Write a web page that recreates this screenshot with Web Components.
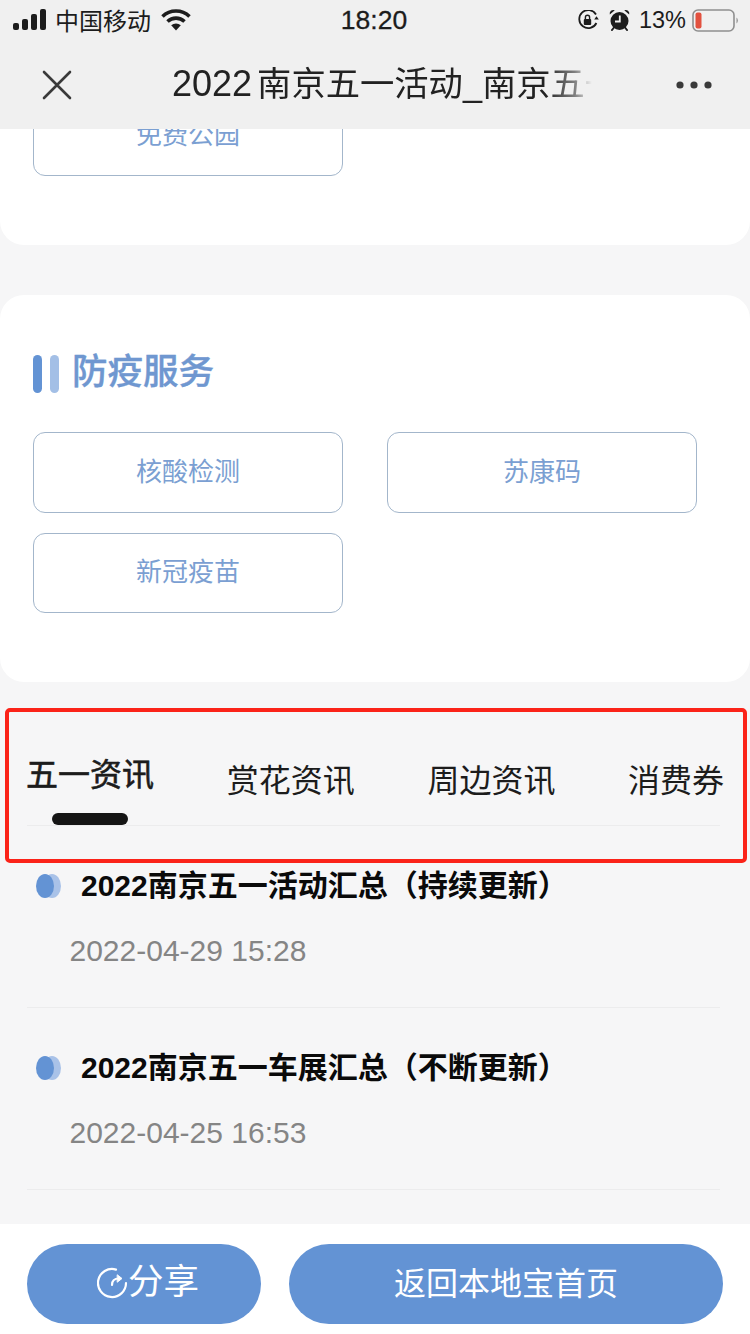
<!DOCTYPE html>
<html lang="zh">
<head>
<meta charset="utf-8">
<title>2022南京五一活动</title>
<style>
    html, body { margin: 0; padding: 0; }
    body {
        width: 750px;
        height: 1334px;
        overflow: hidden;
        background: #f6f6f7;
        font-family: "Liberation Sans", "Noto Sans CJK SC", sans-serif;
    }
</style>
</head>
<body>
<app-shell>
    <status-bar slot="top"></status-bar>
    <nav-bar slot="top" title-number="2022" title-text="南京五一活动_南京五一活动汇总"></nav-bar>

    <service-card slot="main" clipped>
        <link-button>免费公园</link-button>
    </service-card>

    <service-card slot="main" heading="防疫服务">
        <link-button>核酸检测</link-button>
        <link-button>苏康码</link-button>
        <link-button>新冠疫苗</link-button>
    </service-card>

    <tab-strip slot="main"></tab-strip>

    <news-item slot="main" title-text="2022南京五一活动汇总（持续更新）" date="2022-04-29 15:28"></news-item>
    <news-item slot="main" title-text="2022南京五一车展汇总（不断更新）" date="2022-04-25 16:53"></news-item>

    <bottom-bar slot="bottom"></bottom-bar>
    <red-mark slot="overlay"></red-mark>
</app-shell>

<script>
class AppShell extends HTMLElement {
    constructor() {
        super();
        this.attachShadow({ mode: 'open' });
        this.shadowRoot.innerHTML = `
            <style>
                :host {
                    display: flex;
                    flex-direction: column;
                    position: relative;
                    width: 750px;
                    height: 1334px;
                    overflow: hidden;
                }
                .top { background: #f0f0f0; flex: none; height: 129px; }
                .main { flex: 1; min-height: 0; overflow: hidden; display: flex; flex-direction: column; }
                .bottom { flex: none; }
            </style>
            <div class="top"><slot name="top"></slot></div>
            <div class="main"><slot name="main"></slot></div>
            <div class="bottom"><slot name="bottom"></slot></div>
            <slot name="overlay"></slot>
        `;
    }
}

class StatusBar extends HTMLElement {
    constructor() {
        super();
        this.attachShadow({ mode: 'open' });
        this.shadowRoot.innerHTML = `
            <style>
                :host {
                    display: grid;
                    grid-template-columns: 1fr auto 1fr;
                    align-items: center;
                    height: 40px;
                    padding: 0 12px 0 13px;
                    color: #1c1c1c;
                }
                .left, .right { display: flex; align-items: center; }
                .right { justify-content: flex-end; }
                .carrier { margin: 0 10px 2px 9px; font-size: 24px; }
                .time { font-size: 26.5px; margin-left: -3px; -webkit-text-stroke: 0.3px #1c1c1c; }
                .pct { margin: 0 6px 0 9px; font-size: 23.5px; }
                svg { display: block; flex: none; }
            </style>
            <div class="left">
                <svg width="33" height="22" viewBox="0 0 33 22" fill="#1c1c1c">
                    <rect x="0" y="14" width="6" height="7" rx="2"/>
                    <rect x="9" y="10" width="6" height="11" rx="2"/>
                    <rect x="18" y="5" width="6" height="16" rx="2"/>
                    <rect x="27" y="0" width="6" height="21" rx="2"/>
                </svg>
                <span class="carrier">中国移动</span>
                <svg width="30" height="22" viewBox="0 0 30 22" fill="none" stroke="#1c1c1c" stroke-width="3.6">
                    <path d="M1.5 7.5a19.5 19.5 0 0 1 27 0"/>
                    <path d="M6.5 12.5a12.5 12.5 0 0 1 17 0"/>
                    <path d="M15 21.5l-4.8-5.2a7 7 0 0 1 9.6 0z" fill="#1c1c1c" stroke="none"/>
                </svg>
            </div>
            <div class="time">18:20</div>
            <div class="right">
                <svg width="22" height="20" viewBox="0 0 22 20" fill="none" stroke="#1c1c1c" stroke-width="1.8" style="margin-right:10px">
                    <path d="M19 4.500A9 9 0 1 0 19.400 13"/>
                    <path d="M17.200 9.500h4.600l-2.300-3.200z" fill="#1c1c1c" stroke="none"/>
                    <rect x="6.800" y="9" width="7.400" height="6" rx="1" fill="#1c1c1c" stroke="none"/>
                    <path d="M8.400 9V7.400a2.100 2.100 0 0 1 4.200 0V9" stroke-width="1.400"/>
                </svg>
                <svg width="21" height="22" viewBox="0 0 21 22">
                    <circle cx="10.500" cy="12" r="9" fill="#1c1c1c"/>
                    <path d="M0.800 5.500a3.600 3.600 0 0 1 5-4.200zM20.200 5.500a3.600 3.600 0 0 0-5-4.200z" fill="#1c1c1c"/>
                    <path d="M3 21l2.400-3M18 21l-2.400-3" stroke="#1c1c1c" stroke-width="2" stroke-linecap="round"/>
                    <path d="M10.800 6.500v6H6" fill="none" stroke="#f0f0f0" stroke-width="1.800"/>
                </svg>
                <span class="pct">13%</span>
                <svg width="46" height="23" viewBox="0 0 46 23">
                    <rect x="1" y="1" width="41" height="21" rx="5" fill="none" stroke="#8f8f8f" stroke-width="1.600"/>
                    <rect x="3.500" y="3.500" width="6" height="16" rx="2" fill="#e2513f"/>
                    <path d="M44.500 8.500a4 4 0 0 1 0 6z" fill="#8f8f8f"/>
                </svg>
            </div>
        `;
    }
}

class NavBar extends HTMLElement {
    constructor() {
        super();
        this.attachShadow({ mode: 'open' });
        this.shadowRoot.innerHTML = `
            <style>
                :host {
                    display: flex;
                    align-items: center;
                    height: 89px;
                    padding: 0 38px 0 42px;
                    color: #222;
                }
                .title {
                    flex: none;
                    width: 424px;
                    margin-left: 100px;
                    margin-right: 80px;
                    margin-bottom: 7px;
                    font-size: 34.3px;
                    white-space: nowrap;
                    overflow: hidden;
                    -webkit-mask-image: linear-gradient(to right, #000 88%, rgba(0,0,0,0.55) 95%, transparent 99%);
                    mask-image: linear-gradient(to right, #000 88%, rgba(0,0,0,0.55) 95%, transparent 99%);
                }
                .num { font-size: 36px; margin-right: 5px; }
                svg { display: block; flex: none; }
            </style>
            <svg width="30" height="30" viewBox="0 0 30 30" stroke="#3a3a3a" stroke-width="2.600" stroke-linecap="round">
                <path d="M2 2l26 26M28 2L2 28"/>
            </svg>
            <div class="title"><span class="num"></span><span class="text"></span></div>
            <svg width="36" height="8" viewBox="0 0 36 8" fill="#3a3a3a">
                <circle cx="4" cy="4" r="3.600"/><circle cx="18" cy="4" r="3.600"/><circle cx="32" cy="4" r="3.600"/>
            </svg>
        `;
        this.shadowRoot.querySelector('.num').textContent = this.getAttribute('title-number');
        this.shadowRoot.querySelector('.text').textContent = this.getAttribute('title-text');
    }
}

class ServiceCard extends HTMLElement {
    constructor() {
        super();
        this.attachShadow({ mode: 'open' });
        const heading = this.getAttribute('heading');
        this.shadowRoot.innerHTML = `
            <style>
                :host {
                    display: flex;
                    flex-direction: column;
                    flex: none;
                    box-sizing: border-box;
                    background: #fff;
                    border-radius: 24px;
                    padding: 60px 53px 69px 33px;
                    margin-bottom: 50px;
                }
                :host([clipped]) {
                    height: 116px;
                    padding-top: 0;
                    justify-content: flex-end;
                    border-radius: 0 0 24px 24px;
                }
                :host(:not([clipped])) { margin-bottom: 0; }
                .head { display: flex; align-items: center; height: 38px; margin-bottom: 39px; }
                .bar { width: 9px; height: 38px; border-radius: 5px; background: #6393d4; margin-right: 8px; }
                .bar + .bar { background: #a3bfe6; margin-right: 13px; }
                h2 {
                    margin: 0 0 4px;
                    font-size: 35.5px;
                    font-weight: 500;
                    color: #6f97d0;
                    line-height: 38px;
                    -webkit-text-stroke: 0.4px #6f97d0;
                }
                .grid { flex: none; display: grid; grid-template-columns: 310px 310px; column-gap: 44px; row-gap: 20px; }
            </style>
            ${heading ? `<div class="head"><span class="bar"></span><span class="bar"></span><h2>${heading}</h2></div>` : ''}
            <div class="grid"><slot></slot></div>
        `;
    }
}

class LinkButton extends HTMLElement {
    constructor() {
        super();
        this.attachShadow({ mode: 'open' });
        this.shadowRoot.innerHTML = `
            <style>
                :host {
                    display: flex;
                    align-items: center;
                    justify-content: center;
                    box-sizing: border-box;
                    height: 80.500px;
                    padding-bottom: 6px;
                    border: 1px solid #a3b6cb;
                    border-radius: 12px;
                    color: #7b9fd2;
                    font-size: 26px;
                }
            </style>
            <slot></slot>
        `;
    }
}

class TabStrip extends HTMLElement {
    constructor() {
        super();
        this.attachShadow({ mode: 'open' });
        this.shadowRoot.innerHTML = `
            <style>
                :host {
                    display: block;
                    flex: none;
                    margin: 0 30px 0 27px;
                    height: 144px;
                    color: #1c1c1c;
                }
                .row {
                    display: flex;
                    column-gap: 72.700px;
                    height: 144px;
                    border-bottom: 1px solid #ececed;
                    box-sizing: border-box;
                }
                .tab { font-size: 32px; line-height: 44px; padding-top: 77px; white-space: nowrap; }
                .tab:first-child { margin-left: -1px; }
                .active { padding-top: 71px; -webkit-text-stroke: 0.6px #1c1c1c; display: flex; flex-direction: column; align-items: center; }
                .active::after {
                    content: "";
                    width: 76px;
                    height: 12px;
                    margin-top: 16px;
                    border-radius: 6px;
                    background: #151515;
                }
            </style>
            <div class="row">
                <div class="tab active">五一资讯</div>
                <div class="tab">赏花资讯</div>
                <div class="tab">周边资讯</div>
                <div class="tab">消费券</div>
            </div>
        `;
    }
}

class NewsItem extends HTMLElement {
    constructor() {
        super();
        this.attachShadow({ mode: 'open' });
        this.shadowRoot.innerHTML = `
            <style>
                :host {
                    display: block;
                    flex: none;
                    box-sizing: border-box;
                    height: 182px;
                    margin: 0 30px 0 27px;
                    padding-left: 9px;
                    padding-top: 38px;
                    border-bottom: 1px solid #ececed;
                }
                .title {
                    display: flex;
                    align-items: center;
                    height: 40px;
                    font-size: 30px;
                    font-weight: 700;
                    color: #0a0a0a;
                    white-space: nowrap;
                }
                .text { margin-bottom: 2px; }
                .dot { position: relative; width: 25px; height: 24px; margin: 3px 20px 0 0; flex: none; }
                .dot i { position: absolute; top: 0; width: 18px; height: 24px; border-radius: 50%; }
                .dot i:first-child { right: 0; background: #a9c2e8; }
                .dot i:last-child { left: 0; background: #6393d4; }
                .date { margin: 27px 0 0 33.500px; font-size: 30px; line-height: 40px; color: #858585; }
            </style>
            <div class="title"><span class="dot"><i></i><i></i></span><span class="text"></span></div>
            <div class="date"></div>
        `;
        this.shadowRoot.querySelector('.text').textContent = this.getAttribute('title-text');
        this.shadowRoot.querySelector('.date').textContent = this.getAttribute('date');
    }
}

class BottomBar extends HTMLElement {
    constructor() {
        super();
        this.attachShadow({ mode: 'open' });
        this.shadowRoot.innerHTML = `
            <style>
                :host {
                    display: flex;
                    column-gap: 28px;
                    box-sizing: border-box;
                    height: 110px;
                    padding: 20px 27px 10px;
                    background: #fff;
                }
                .btn {
                    display: flex;
                    align-items: center;
                    justify-content: center;
                    height: 80px;
                    border-radius: 40px;
                    background: #6393d4;
                    color: #fff;
                    font-size: 32px;
                    white-space: nowrap;
                }
                .share { width: 234px; flex: none; padding-left: 8px; box-sizing: border-box; font-size: 35.500px; }
                .share span { margin-bottom: 12px; }
                .home { width: 434px; flex: none; padding-bottom: 6px; box-sizing: border-box; }
                svg { display: block; flex: none; margin-bottom: 2px; }
            </style>
            <div class="btn share">
                <svg width="31" height="33" viewBox="0 0 31 33" fill="none" stroke="#fff" stroke-width="2.200" stroke-linecap="round">
                    <path d="M29 16a14 14 0 1 1-10-13.400"/>
                    <path d="M15 18c0-4 2.500-6.500 7-6.500"/>
                    <path d="M20.500 8l4.500 3.500-4.500 3.500z" fill="#fff" stroke-width="1"/>
                </svg>
                <span>分享</span>
            </div>
            <div class="btn home">返回本地宝首页</div>
        `;
    }
}

// annotation drawn over the tab strip in the reference
class RedMark extends HTMLElement {
    constructor() {
        super();
        this.attachShadow({ mode: 'open' });
        this.shadowRoot.innerHTML = `
            <style>
                :host {
                    position: absolute;
                    left: 5px;
                    top: 708px;
                    width: 742px;
                    height: 155px;
                    box-sizing: border-box;
                    border: 4px solid #fb2319;
                    border-radius: 5px;
                    pointer-events: none;
                }
            </style>
        `;
    }
}

customElements.define('app-shell', AppShell);
customElements.define('status-bar', StatusBar);
customElements.define('nav-bar', NavBar);
customElements.define('service-card', ServiceCard);
customElements.define('link-button', LinkButton);
customElements.define('tab-strip', TabStrip);
customElements.define('news-item', NewsItem);
customElements.define('bottom-bar', BottomBar);
customElements.define('red-mark', RedMark);
</script>
</body>
</html>
